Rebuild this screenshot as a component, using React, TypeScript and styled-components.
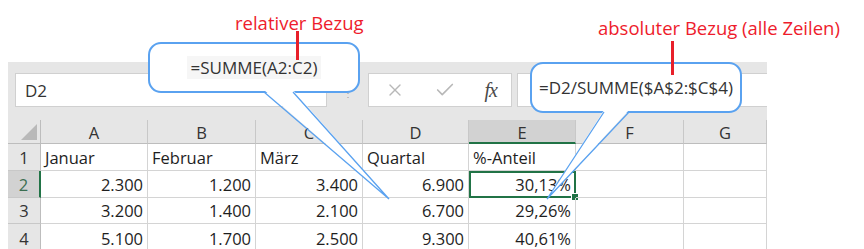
import React from 'react';
import styled, { createGlobalStyle, css } from 'styled-components';
import { X, Check } from 'lucide-react';

const GlobalStyle = createGlobalStyle`
  body {
    margin: 0;
    background: #fff;
    font-family: 'Open Sans', 'Liberation Sans', sans-serif;
  }
`;

const columns = ['A', 'B', 'C', 'D', 'E', 'F', 'G'];
const widths = [33, 107, 108, 107, 106, 107, 108, 83];
const heights = [24, 27, 27, 26, 30];

const rows: { num: string; cells: (string | null)[]; align: 'left' | 'right' }[] = [
  { num: '1', cells: ['Januar', 'Februar', 'März', 'Quartal', '%-Anteil', null, null], align: 'left' },
  { num: '2', cells: ['2.300', '1.200', '3.400', '6.900', '30,13%', null, null], align: 'right' },
  { num: '3', cells: ['3.200', '1.400', '2.100', '6.700', '29,26%', null, null], align: 'right' },
  { num: '4', cells: ['5.100', '1.700', '2.500', '9.300', '40,61%', null, null], align: 'right' },
];

export default function App() {
  return (
    <Page>
      <GlobalStyle />
      <Sheet>
        <FormulaBar>
          <NameBox>D2</NameBox>
          <Dots>⋮</Dots>
          <IconBox>
            <X size={20} strokeWidth={1.6} color="#b8b8b8" />
            <Check size={22} strokeWidth={1.8} color="#b8b8b8" />
            <Fx>fx</Fx>
          </IconBox>
          <FormulaInput />
        </FormulaBar>

        <Grid>
          <CornerCell>
            <Triangle />
          </CornerCell>
          {columns.map((c) => (
            <ColHead key={c} $active={c === 'E'}>
              {c}
            </ColHead>
          ))}
          {rows.map((r) => (
            <React.Fragment key={r.num}>
              <RowHead $active={r.num === '2'}>{r.num}</RowHead>
              {r.cells.map((v, i) => (
                <Cell key={i} $align={r.align} $selected={r.num === '2' && i === 4}>
                  {v}
                  {r.num === '2' && i === 4 && <Handle />}
                </Cell>
              ))}
            </React.Fragment>
          ))}
        </Grid>
      </Sheet>

      <Callout $left={148} $top={42}>
        <CalloutText>=SUMME(A2:C2)</CalloutText>
      </Callout>
      <Callout $left={530} $top={62}>
        <span>=D2/SUMME($A$2:$C$4)</span>
      </Callout>

      <Tails width={864} height={249} viewBox="0 0 864 249">
        <polygon points="264,90 389,199 293,90" fill="#fff" />
        <polyline points="264,92 389,199 293,92" fill="none" stroke="#5aa2f0" strokeWidth={1.3} />
        <polygon points="604,110 547,199 629,110" fill="#fff" />
        <polyline points="604,112 547,199 629,112" fill="none" stroke="#5aa2f0" strokeWidth={1.3} />
      </Tails>

      <Label $left={235} $top={10}>relativer Bezug</Label>
      <Pointer $left={296} $top={31} $height={29} />
      <Label $left={598} $top={15}>absoluter Bezug (alle Zeilen)</Label>
      <Pointer $left={671} $top={41} $height={34} />
    </Page>
  );
}

const Page = styled.div`
  position: relative;
  width: 864px;
  height: 249px;
  overflow: hidden;
  background: #fff;
`;

const Sheet = styled.div`
  margin: 62px 0 0 8px;
  width: 759px;
  background: #e6e6e6;
`;

const FormulaBar = styled.div`
  display: flex;
  align-items: stretch;
  height: 58px;
  padding: 11px 0 13px 7px;
  box-sizing: border-box;
`;

const Box = css`
  background: #fff;
  border: 1px solid #d0d0d0;
  box-sizing: border-box;
`;

const NameBox = styled.div`
  ${Box};
  width: 312px;
  display: flex;
  align-items: center;
  padding-left: 9px;
  font-size: 17px;
  color: #333;
`;

const Dots = styled.div`
  width: 41px;
  display: flex;
  align-items: center;
  justify-content: center;
  padding-top: 6px;
  font-size: 10px;
  color: #a0a0a0;
`;

const IconBox = styled.div`
  ${Box};
  width: 144px;
  display: flex;
  align-items: center;
  justify-content: space-between;
  padding: 0 14px 0 16px;
`;

const Fx = styled.i`
  font-family: 'Liberation Serif', serif;
  font-size: 20px;
  color: #4a4a4a;
  letter-spacing: -1px;
`;

const FormulaInput = styled.div`
  ${Box};
  flex: 1;
  margin-left: 5px;
  border-right: none;
`;

const Grid = styled.div`
  display: grid;
  grid-template-columns: ${widths.map((w) => `${w}px`).join(' ')};
  grid-template-rows: ${heights.map((h) => `${h}px`).join(' ')};
  background: #fff;
  font-size: 16.5px;
  color: #1e1e1e;
`;

const HeadBase = css`
  background: #e6e6e6;
  box-sizing: border-box;
  display: flex;
  align-items: center;
  justify-content: center;
  color: #333;
  font-size: 16.5px;
`;

const CornerCell = styled.div`
  ${HeadBase};
  border-right: 1px solid #bdbdbd;
  border-bottom: 1px solid #bdbdbd;
  align-items: flex-end;
  justify-content: flex-end;
  padding: 0 3px 3px 0;
`;

const Triangle = styled.div`
  width: 0;
  height: 0;
  border-left: 16px solid transparent;
  border-bottom: 16px solid #b9b9b9;
`;

const ColHead = styled.div<{ $active?: boolean }>`
  ${HeadBase};
  border-right: 1px solid #c8c8c8;
  border-bottom: ${(p) => (p.$active ? '2px solid #217346' : '1px solid #bdbdbd')};
  background: ${(p) => (p.$active ? '#d2d2d2' : '#e6e6e6')};
  padding-top: 2px;
`;

const RowHead = styled.div<{ $active?: boolean }>`
  ${HeadBase};
  border-bottom: 1px solid #c8c8c8;
  border-right: ${(p) => (p.$active ? '2px solid #217346' : '1px solid #bdbdbd')};
  background: ${(p) => (p.$active ? '#d2d2d2' : '#e6e6e6')};
  color: ${(p) => (p.$active ? '#3b6e50' : '#333')};
`;

const Cell = styled.div<{ $align: 'left' | 'right'; $selected?: boolean }>`
  position: relative;
  box-sizing: border-box;
  display: flex;
  align-items: center;
  justify-content: ${(p) => (p.$align === 'right' ? 'flex-end' : 'flex-start')};
  padding: 0 4px;
  border-right: 1px solid #d4d4d4;
  border-bottom: 1px solid #d4d4d4;
  ${(p) =>
    p.$selected &&
    css`
      outline: 2px solid #217346;
      outline-offset: -2px;
    `}
`;

const Handle = styled.span`
  position: absolute;
  right: -4px;
  bottom: -4px;
  width: 6px;
  height: 6px;
  background: #217346;
  border: 1px solid #fff;
`;

const Callout = styled.div<{ $left: number; $top: number }>`
  position: absolute;
  left: ${(p) => p.$left}px;
  top: ${(p) => p.$top}px;
  width: 212px;
  height: 51px;
  box-sizing: border-box;
  border: 2px solid #5aa2f0;
  border-radius: 13px;
  background: #fff;
  display: flex;
  align-items: center;
  justify-content: center;
  font-size: 17px;
  color: #333;
`;

const CalloutText = styled.span`
  background: #f6f6f6;
  padding: 0 4px;
`;

const Tails = styled.svg`
  position: absolute;
  left: 0;
  top: 0;
  pointer-events: none;
`;

const Label = styled.div<{ $left: number; $top: number }>`
  position: absolute;
  left: ${(p) => p.$left}px;
  top: ${(p) => p.$top}px;
  font-size: 18.5px;
  color: #ee1c2c;
  white-space: nowrap;
`;

const Pointer = styled.div<{ $left: number; $top: number; $height: number }>`
  position: absolute;
  left: ${(p) => p.$left}px;
  top: ${(p) => p.$top}px;
  width: 3px;
  height: ${(p) => p.$height}px;
  background: #e8202a;
`;
